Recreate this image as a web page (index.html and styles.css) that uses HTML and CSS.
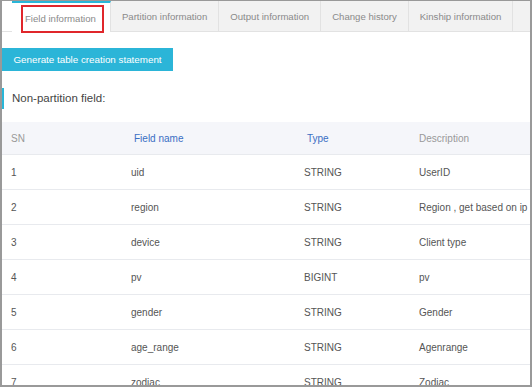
FILE: index.html
```html
<!DOCTYPE html>
<html lang="en">
<head>
  <meta charset="UTF-8">
  <title>Table details</title>
  <link rel="stylesheet" href="styles.css">
</head>
<body>

  <div class="frame">

    <!-- Tab bar -->
    <div class="tabs">
      <div class="tab active"><span class="tab-mark">Field information</span></div>
      <div class="tab">Partition information</div>
      <div class="tab">Output information</div>
      <div class="tab">Change history</div>
      <div class="tab">Kinship information</div>
    </div>

    <div class="content">
      <button class="button">Generate table creation statement</button>

      <h3 class="section-title">Non-partition field:</h3>

      <table class="fields">
        <thead>
          <tr>
            <th class="col-sn">SN</th>
            <th class="col-name link">Field name</th>
            <th class="col-type link">Type</th>
            <th>Description</th>
          </tr>
        </thead>
        <tbody>
          <tr><td>1</td><td>uid</td><td>STRING</td><td>UserID</td></tr>
          <tr><td>2</td><td>region</td><td>STRING</td><td>Region , get based on ip</td></tr>
          <tr><td>3</td><td>device</td><td>STRING</td><td>Client type</td></tr>
          <tr><td>4</td><td>pv</td><td>BIGINT</td><td>pv</td></tr>
          <tr><td>5</td><td>gender</td><td>STRING</td><td>Gender</td></tr>
          <tr><td>6</td><td>age_range</td><td>STRING</td><td>Agenrange</td></tr>
          <tr><td>7</td><td>zodiac</td><td>STRING</td><td>Zodiac</td></tr>
        </tbody>
      </table>
    </div>

  </div>

</body>
</html>
```

FILE: styles.css
```css
body {
  margin: 0;
  padding: 0;
  font-family: "Liberation Sans", Arial, sans-serif;
  background-color: #fff;
  color: #555;
}

.frame {
  box-sizing: border-box;
  width: 532px;
  height: 387px;
  border: 2px solid #999;
  border-top-width: 1px;
  overflow: hidden;
}

/* Tabs */
.tabs {
  display: flex;
  height: 30px;
  padding-left: 10px;
  background: linear-gradient(to right, #fff 10px, #f2f2f2 10px);
  border-bottom: 1px solid #e2e2e2;
  white-space: nowrap;
}

.tab {
  display: flex;
  align-items: center;
  padding: 0 11px;
  font-size: 9.6px;
  color: #8a8a8a;
  border-right: 1px solid #e2e2e2;
}

.tab.active {
  background-color: #fff;
  border-top: 2px solid #29b6d8;
  margin-bottom: -1px;
  padding: 2px 6px 0 9px;
  align-items: flex-start;
}

.tab-mark {
  border: 2px solid #e0262b;
  padding: 6px 6px 7px 2px;
}

/* Content */
.content {
  padding-top: 16px;
}

.button {
  display: block;
  width: 171px;
  height: 23px;
  padding: 0;
  border: none;
  background-color: #2bb5d8;
  color: #fff;
  font-family: inherit;
  font-size: 9.8px;
  white-space: nowrap;
}

.section-title {
  margin: 17px 0 0;
  height: 21px;
  line-height: 21px;
  padding-left: 8px;
  border-left: 2px solid #29b6d8;
  font-size: 11.5px;
  font-weight: normal;
  color: #444;
}

.fields {
  width: 100%;
  margin-top: 13px;
  border-collapse: collapse;
  font-size: 10px;
  white-space: nowrap;
}

.fields th,
.fields td {
  text-align: left;
  padding: 0 0 0 9px;
  height: 34px;
  border-bottom: 1px solid #e8eaee;
}

.fields th {
  height: 32px;
  font-weight: normal;
  color: #999;
  background-color: #f5f6fa;
}

.fields th.link {
  padding-left: 12px;
  color: #3a6fc4;
}

.col-sn { width: 111px; }
.col-name { width: 161px; }
.col-type { width: 103px; }
```
